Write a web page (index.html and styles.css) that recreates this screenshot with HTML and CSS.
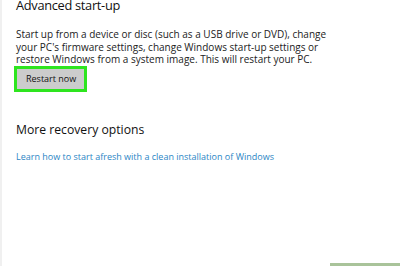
FILE: index.html
```html
<!DOCTYPE html>
<html lang="en">
<head>
    <meta charset="UTF-8">
    <title>Recovery</title>
    <link rel="stylesheet" href="styles.css">
</head>
<body>
    <div class="page">
        <div class="content">
            <h2 class="title">Advanced start-up</h2>
            <p class="desc">Start up from a device or disc (such as a USB drive or DVD), change<br>your PC's firmware settings, change Windows start-up settings or<br>restore Windows from a system image. This will restart your PC.</p>
            <div class="highlight">
                <button class="restart">Restart now</button>
            </div>

            <h2 class="title more">More recovery options</h2>
            <a class="link" href="#">Learn how to start afresh with a clean installation of Windows</a>
        </div>
        <div class="footer">
            <div class="footer-bar"></div>
        </div>
    </div>
</body>
</html>
```

FILE: styles.css
```css
html, body {
    margin: 0;
    height: 100%;
}
body {
    font-family: "Open Sans", "Noto Sans", sans-serif;
    background-color: #fff;
    color: #000;
}
.page {
    height: 266px;
    border-left: 2px solid #f0f0f0;
    display: flex;
    flex-direction: column;
    box-sizing: border-box;
}
.content {
    flex: 1;
    padding: 0 0 0 14px;
}
.title {
    font-weight: normal;
    font-size: 12.8px;
    letter-spacing: -0.3px;
    line-height: 14px;
    margin: -2px 0 0;
    color: #111;
}
.desc {
    font-size: 10px;
    line-height: 12.5px;
    margin: 16px 0 0;
    color: #222;
}
.highlight {
    display: flex;
    width: max-content;
    margin: 0 0 0 -2px;
    border: 3px solid #2ee51f;
}
.restart {
    display: block;
    font-family: inherit;
    font-size: 9px;
    color: #111;
    background-color: #cccccc;
    border: none;
    padding: 0 8px 0 9px;
    height: 20px;
    white-space: nowrap;
}
.more {
    margin-top: 31px;
    font-size: 12.2px;
    letter-spacing: 0;
}
.link {
    display: block;
    margin-top: 13px;
    font-size: 9px;
    color: #2b86c5;
    text-decoration: none;
}
.footer {
    display: flex;
    justify-content: flex-end;
}
.footer-bar {
    width: 70px;
    height: 3px;
    background-color: #a9c39a;
}
```
